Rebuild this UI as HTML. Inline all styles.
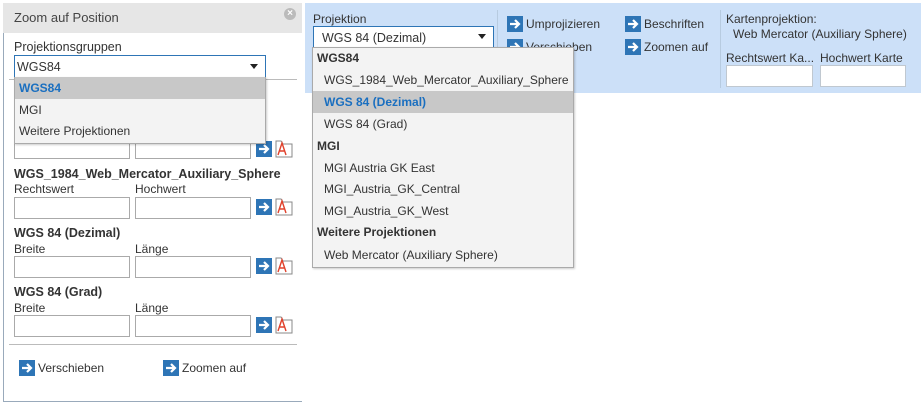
<!DOCTYPE html>
<html><head><meta charset="utf-8"><style>
*{box-sizing:border-box;margin:0;padding:0}
body{width:924px;height:405px;background:#fff;font-family:"Liberation Sans",sans-serif;font-size:12px;color:#333;position:relative;overflow:hidden}
.a{position:absolute;white-space:nowrap}
.inp{position:absolute;border:1px solid #aaa;background:#fff;height:22px}
.ar{position:absolute;width:16px;height:16px;background:#2e75b6}
.ar svg{display:block}
.b{font-weight:bold}
.it{position:absolute;height:22px;line-height:22px;white-space:nowrap}
</style></head><body>
<svg width="0" height="0" style="position:absolute"><defs>
<symbol id="arr" viewBox="0 0 16 16"><path d="M3 8H12M8 4L12 8L8 12" stroke="#fff" stroke-width="2.2" fill="none"/></symbol>
<symbol id="aa" viewBox="0 0 18 18"><path d="M1 1H6L8 4H17V17H1Z" fill="#fff" stroke="#888" stroke-width="1"/><path d="M3 15L7 3L11 15M4.5 11H9.5" stroke="#e0412b" stroke-width="1.4" fill="none"/></symbol>
</defs></svg>

<!-- left panel -->
<div class="a" style="left:3px;top:3px;width:299px;height:399px;border-left:1px solid #9ab;border-bottom:1px solid #9ab"></div>
<div class="a" style="left:3px;top:3px;width:299px;height:30px;background:#e6e6e6"></div>
<div class="a" style="left:14px;top:10px;font-size:13px;color:#444">Zoom auf Position</div>
<div class="a" style="left:284px;top:8px;width:12px;height:12px;border-radius:50%;background:#bbb;color:#fff;font-size:10px;line-height:12px;text-align:center;font-weight:bold">×</div>
<div class="a" style="left:14px;top:40px;font-size:12.5px">Projektionsgruppen</div>
<div class="a" style="left:9px;top:79px;width:288px;height:1px;background:#bbb"></div>

<div class="inp" style="left:14px;top:137px;width:116px"></div>
<div class="inp" style="left:135px;top:137px;width:116px"></div>
<div class="ar" style="left:256px;top:141px"><svg width="16" height="16"><use href="#arr"/></svg></div>
<svg class="a" style="left:275px;top:140px" width="18" height="18"><use href="#aa"/></svg>

<div class="a b" style="left:14px;top:167px;font-size:12.5px">WGS_1984_Web_Mercator_Auxiliary_Sphere</div>
<div class="a" style="left:14px;top:182px">Rechtswert</div><div class="a" style="left:135px;top:182px">Hochwert</div>
<div class="inp" style="left:14px;top:197px;width:116px"></div>
<div class="inp" style="left:135px;top:197px;width:116px"></div>
<div class="ar" style="left:256px;top:199px"><svg width="16" height="16"><use href="#arr"/></svg></div>
<svg class="a" style="left:275px;top:198px" width="18" height="18"><use href="#aa"/></svg>

<div class="a b" style="left:14px;top:226px;font-size:12.5px">WGS 84 (Dezimal)</div>
<div class="a" style="left:14px;top:242px">Breite</div><div class="a" style="left:135px;top:242px">Länge</div>
<div class="inp" style="left:14px;top:256px;width:116px"></div>
<div class="inp" style="left:135px;top:256px;width:116px"></div>
<div class="ar" style="left:256px;top:258px"><svg width="16" height="16"><use href="#arr"/></svg></div>
<svg class="a" style="left:275px;top:257px" width="18" height="18"><use href="#aa"/></svg>

<div class="a b" style="left:14px;top:285px;font-size:12.5px">WGS 84 (Grad)</div>
<div class="a" style="left:14px;top:301px">Breite</div><div class="a" style="left:135px;top:301px">Länge</div>
<div class="inp" style="left:14px;top:315px;width:116px"></div>
<div class="inp" style="left:135px;top:315px;width:116px"></div>
<div class="ar" style="left:256px;top:317px"><svg width="16" height="16"><use href="#arr"/></svg></div>
<svg class="a" style="left:275px;top:316px" width="18" height="18"><use href="#aa"/></svg>

<div class="a" style="left:9px;top:344px;width:288px;height:1px;background:#bbb"></div>
<div class="ar" style="left:19px;top:360px"><svg width="16" height="16"><use href="#arr"/></svg></div>
<div class="a" style="left:38px;top:361px">Verschieben</div>
<div class="ar" style="left:163px;top:360px"><svg width="16" height="16"><use href="#arr"/></svg></div>
<div class="a" style="left:182px;top:361px">Zoomen auf</div>

<!-- left select + dropdown -->
<div class="a" style="left:14px;top:55px;width:252px;height:23px;border:1px solid #2e75b6;background:#fff"></div>
<div class="a" style="left:17px;top:60px;font-size:12.5px">WGS84</div>
<div class="a" style="left:250px;top:64px;border-left:4px solid transparent;border-right:4px solid transparent;border-top:5px solid #222"></div>
<div class="a" style="left:14px;top:77px;width:252px;height:67px;background:#f3f3f3;border:1px solid #aaa;box-shadow:1px 1px 2px rgba(0,0,0,.2)"></div>
<div class="it" style="left:15px;top:77px;width:250px;background:#c8c8c8;padding-left:4px;color:#1a6fc0;font-weight:bold">WGS84</div>
<div class="it" style="left:19px;top:99px">MGI</div>
<div class="it" style="left:19px;top:120px">Weitere Projektionen</div>

<!-- right toolbar -->
<div class="a" style="left:305px;top:3px;width:616px;height:90px;background:#cce0f8"></div>
<div class="a" style="left:313px;top:12px">Projektion</div>
<div class="a" style="left:497px;top:10px;width:1px;height:78px;background:#b7cbe0"></div>
<div class="a" style="left:720px;top:10px;width:1px;height:78px;background:#b7cbe0"></div>
<div class="ar" style="left:507px;top:16px"><svg width="16" height="16"><use href="#arr"/></svg></div>
<div class="a" style="left:526px;top:17px">Umprojizieren</div>
<div class="ar" style="left:507px;top:39px"><svg width="16" height="16"><use href="#arr"/></svg></div>
<div class="a" style="left:526px;top:40px">Verschieben</div>
<div class="ar" style="left:625px;top:16px"><svg width="16" height="16"><use href="#arr"/></svg></div>
<div class="a" style="left:644px;top:17px">Beschriften</div>
<div class="ar" style="left:625px;top:39px"><svg width="16" height="16"><use href="#arr"/></svg></div>
<div class="a" style="left:644px;top:40px">Zoomen auf</div>
<div class="a" style="left:726px;top:12px">Kartenprojektion:</div>
<div class="a" style="left:733px;top:27px">Web Mercator (Auxiliary Sphere)</div>
<div class="a" style="left:726px;top:51px">Rechtswert Ka...</div>
<div class="a" style="left:820px;top:51px">Hochwert Karte</div>
<div class="inp" style="left:726px;top:65px;width:87px;border-color:#c0c8d0"></div>
<div class="inp" style="left:820px;top:65px;width:86px;border-color:#c0c8d0"></div>

<!-- right select + dropdown -->
<div class="a" style="left:313px;top:26px;width:181px;height:22px;border:1px solid #2e75b6;background:#fff"></div>
<div class="a" style="left:322px;top:31px;font-size:12.5px">WGS 84 (Dezimal)</div>
<div class="a" style="left:478px;top:34px;border-left:4px solid transparent;border-right:4px solid transparent;border-top:5px solid #222"></div>
<div class="a" style="left:312px;top:47px;width:262px;height:221px;background:#f3f3f3;border:1px solid #aaa;box-shadow:1px 1px 2px rgba(0,0,0,.2)"></div>
<div class="it b" style="left:317px;top:47px">WGS84</div>
<div class="it" style="left:324px;top:69px">WGS_1984_Web_Mercator_Auxiliary_Sphere</div>
<div class="it b" style="left:313px;top:91px;width:260px;background:#c8c8c8;padding-left:11px;color:#1a6fc0">WGS 84 (Dezimal)</div>
<div class="it" style="left:324px;top:113px">WGS 84 (Grad)</div>
<div class="it b" style="left:317px;top:135px">MGI</div>
<div class="it" style="left:324px;top:157px">MGI Austria GK East</div>
<div class="it" style="left:324px;top:178px">MGI_Austria_GK_Central</div>
<div class="it" style="left:324px;top:200px">MGI_Austria_GK_West</div>
<div class="it b" style="left:317px;top:221px">Weitere Projektionen</div>
<div class="it" style="left:324px;top:244px">Web Mercator (Auxiliary Sphere)</div>
</body></html>
